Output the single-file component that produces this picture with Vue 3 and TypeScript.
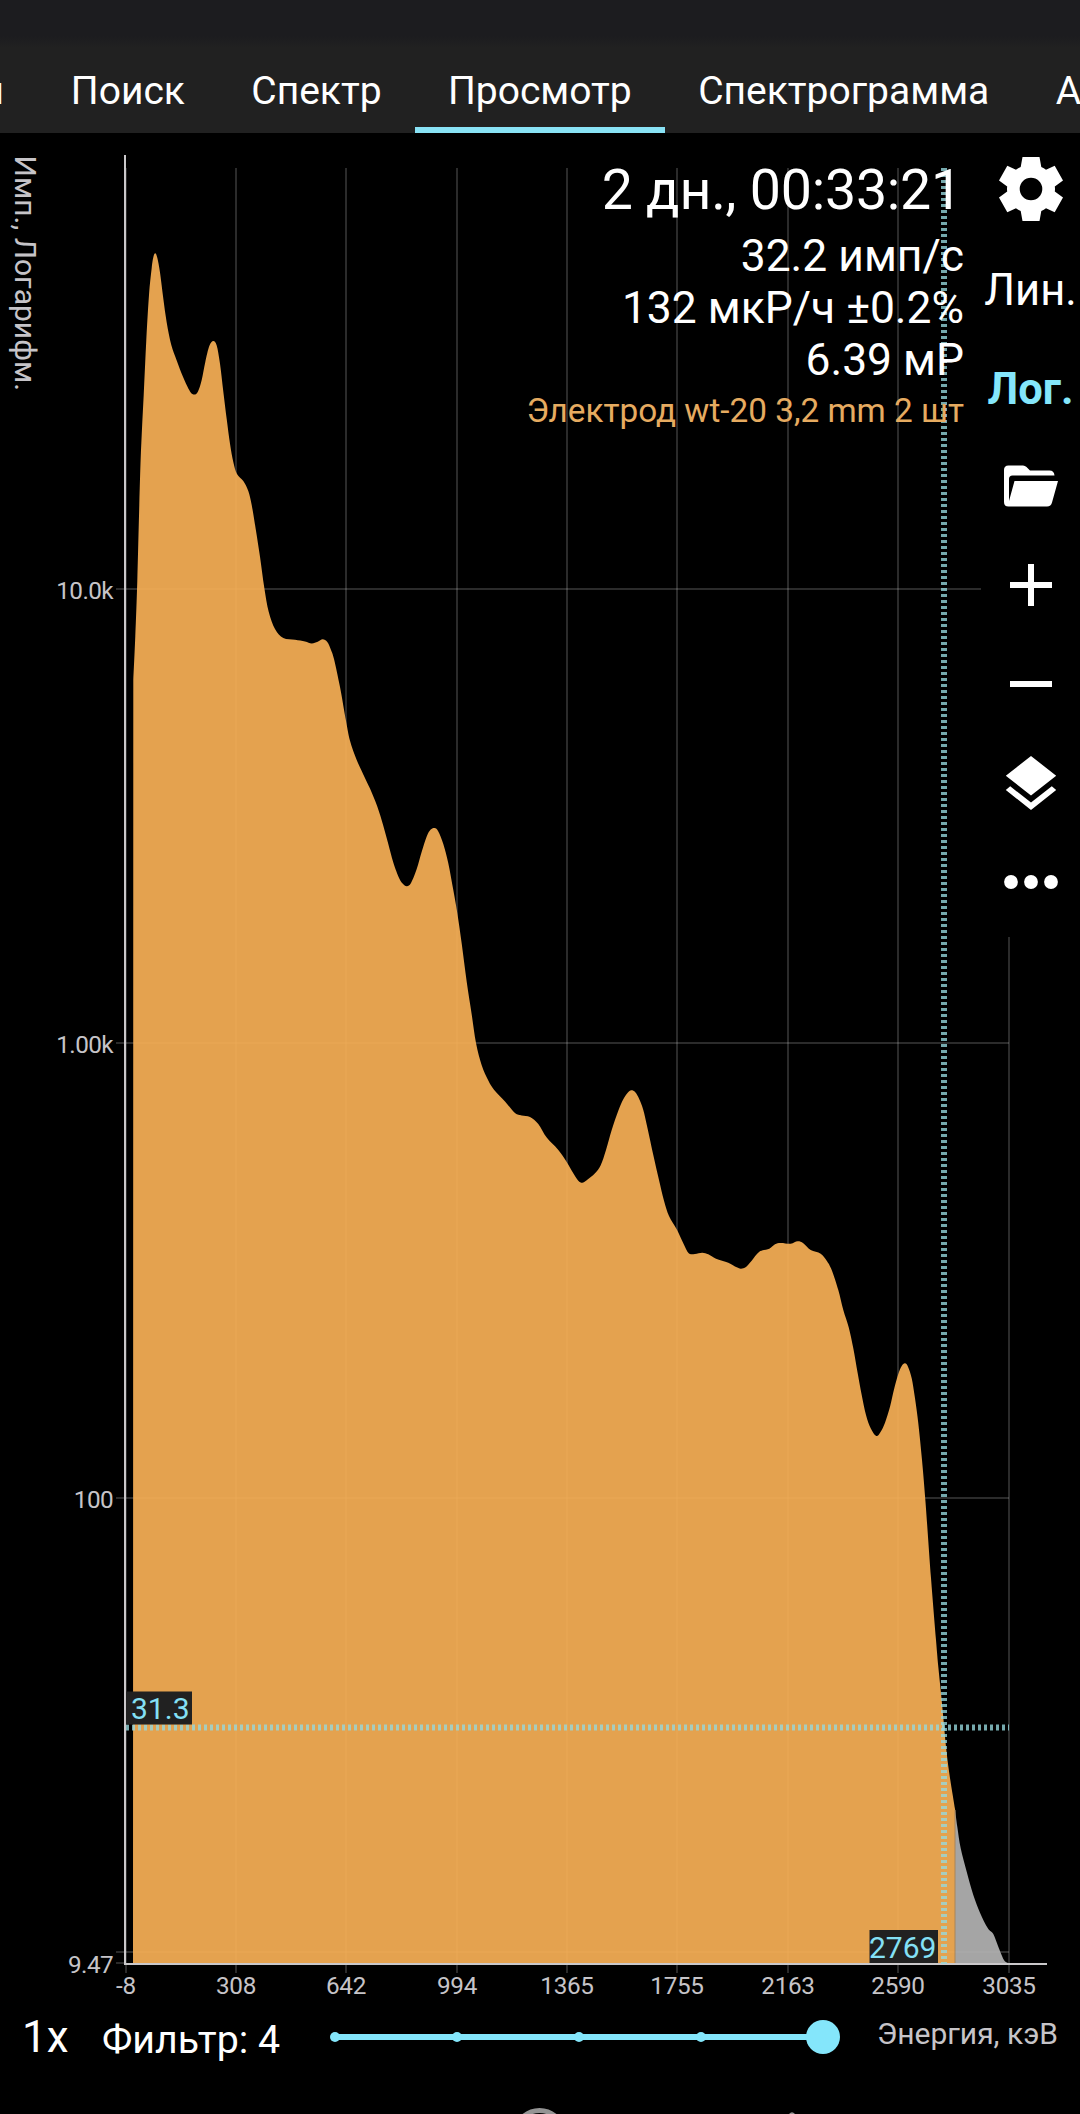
<script setup lang="ts">
type Point = [number, number]

const tabs = [
  { label: 'ы', active: false },
  { label: 'Поиск', active: false },
  { label: 'Спектр', active: false },
  { label: 'Просмотр', active: true },
  { label: 'Спектрограмма', active: false },
  { label: 'А', active: false },
]

const xTicks = [
  { x: 126, label: '-8' },
  { x: 236, label: '308' },
  { x: 346, label: '642' },
  { x: 457, label: '994' },
  { x: 567, label: '1365' },
  { x: 677, label: '1755' },
  { x: 788, label: '2163' },
  { x: 898, label: '2590' },
  { x: 1009, label: '3035' },
]

const yTicks = [
  { y: 589, label: '10.0k' },
  { y: 1043, label: '1.00k' },
  { y: 1498, label: '100' },
  { y: 1963, label: '9.47' },
]

const splitX = 955
const baseY = 1963

// Smoothed spectrum envelope in chart coordinates
const main: Point[] = [
  [133.3, 680], [135.3, 636], [137.3, 581], [139.3, 505], [141, 450], [143.7, 395], [146.3, 340], [149, 295],
  [151.7, 268], [153.5, 256.5], [155.3, 253.3], [157.3, 257.8], [160, 272.6], [163.3, 298.4], [166.7, 322.5],
  [171.3, 345], [176.7, 360.4], [183.3, 377.6], [190, 391.4], [194.3, 394.5], [198, 391.4], [201.7, 380],
  [205.3, 362], [209.3, 346], [213.3, 341], [216.7, 345.6], [220, 363.8], [223.3, 391.4], [226.7, 419],
  [230, 443.7], [233.3, 462], [237, 474], [243.3, 481], [248.3, 491], [251.7, 505], [255.7, 529], [260, 556.7],
  [264.3, 587.7], [268.7, 611.8], [275, 629], [283.3, 638], [295, 639.7], [305, 641.4], [311.7, 643.4],
  [317.7, 641.7], [322.7, 639.3], [327.3, 642], [331, 650], [334, 659], [340, 687], [346, 720.8], [350, 740.7],
  [356.7, 759.9], [363.3, 774.4], [370, 788.6], [377.3, 806.6], [383.3, 825.7], [388.3, 844], [393.3, 862.4],
  [399.3, 878.5], [403.3, 884.2], [407, 886.2], [411, 883], [416.7, 869], [421.7, 851.7], [426.7, 836.4],
  [430.7, 829.5], [434.7, 828], [438.3, 831.4], [443.3, 844], [448.3, 863.2], [453.3, 890], [457.3, 913],
  [461.7, 943.6], [466.7, 981.8], [471.7, 1014.4], [476, 1043], [481.7, 1065.3], [488.3, 1080.6], [494, 1089.8],
  [505, 1101.6], [515, 1113], [521.7, 1115.4], [530, 1117], [538.3, 1124], [546.7, 1137.6], [558.3, 1150],
  [566.7, 1162], [573.3, 1173.3], [578.3, 1180.7], [582.3, 1182.7], [586.7, 1180.3], [595, 1173.3],
  [600.7, 1165.3], [606, 1150], [611.7, 1130], [618.3, 1110.7], [623.3, 1099.3], [627.7, 1092.7], [631.3, 1090.3],
  [635.3, 1092.3], [639.3, 1099.3], [643.3, 1110], [647.3, 1127.3], [653.3, 1155], [659, 1180], [664, 1200.7],
  [669, 1216], [676.7, 1229.3], [683.3, 1243.3], [688.7, 1253.3], [695, 1254], [702.3, 1252.7], [708.3, 1254.3],
  [716, 1258.7], [728.3, 1262.7], [736.7, 1267.3], [741, 1268.7], [746, 1267], [751.7, 1260.7], [759.3, 1251.7],
  [769.3, 1248.7], [775, 1244.3], [780.7, 1243], [790.7, 1243.7], [797.7, 1241.3], [803.3, 1243.3],
  [810.7, 1250], [820.7, 1253.7], [826.7, 1260.7], [831.7, 1270], [838.3, 1290], [843.3, 1310], [848.7, 1327.3],
  [853.3, 1348.3], [857.7, 1373.3], [861.7, 1395], [866, 1415], [870.7, 1428.3], [876.3, 1436], [880.7, 1431.7],
  [885, 1422.7], [890, 1406.7], [894.3, 1388.3], [898.3, 1374], [901.7, 1366], [905, 1363.3], [908, 1366.7],
  [911.7, 1378.3], [915, 1398.3], [918.3, 1423.3], [922, 1460], [925.5, 1502], [931, 1578], [936, 1640],
  [938.3, 1666.7], [941, 1693.3], [943.7, 1721.7], [946, 1746.7], [949.3, 1773.3], [955, 1809],
]

const tail: Point[] = [
  [955, 1809], [957.3, 1826.7], [960.7, 1848.3], [966.7, 1871.7], [973.3, 1895], [980, 1912.7], [987.7, 1928],
  [993.3, 1934], [998.3, 1946.7], [1004, 1960], [1008, 1963],
]

function smooth(points: Point[]): string {
  let d = ''
  for (let i = 0; i < points.length - 1; i++) {
    const p0 = points[Math.max(i - 1, 0)]
    const p1 = points[i]
    const p2 = points[i + 1]
    const p3 = points[Math.min(i + 2, points.length - 1)]
    const c1 = [p1[0] + (p2[0] - p0[0]) / 6, p1[1] + (p2[1] - p0[1]) / 6]
    const c2 = [p2[0] - (p3[0] - p1[0]) / 6, p2[1] - (p3[1] - p1[1]) / 6]
    d += `C${c1.map((n) => n.toFixed(2))} ${c2.map((n) => n.toFixed(2))} ${p2}`
  }
  return d
}

const mainPath = `M133 ${baseY}L${main[0]}${smooth(main)}L${splitX} ${baseY}Z`
const tailPath = `M${splitX} ${baseY}L${tail[0]}${smooth(tail)}L1009 ${baseY}Z`

const filterSteps = [0, 1, 2, 3, 4]
</script>

<template>
  <div class="screen">
    <div class="status-bar"></div>
    <nav class="tabs">
      <div v-for="tab in tabs" :key="tab.label" class="tab" :class="{ active: tab.active }">{{ tab.label }}</div>
    </nav>

    <main class="chart">
      <svg class="plot" width="1080" height="1867" viewBox="0 133 1080 1867">
        <g class="grid">
          <line v-for="t in xTicks" :key="t.x" :x1="t.x" :x2="t.x" y1="168" y2="1973" />
          <line v-for="y in [589, 1043, 1498, 1952]" :key="y" x1="116" x2="1009" :y1="y" :y2="y" />
          <line x1="116" x2="126" y1="1963" y2="1963" />
        </g>
        <path :d="mainPath" class="area" />
        <path :d="tailPath" class="area-rest" />
        <line :x1="splitX" :x2="splitX" y1="1810" :y2="baseY" class="split" />
        <line x1="125" x2="125" y1="155" y2="1965" class="axis" />
        <line x1="124" x2="1047" y1="1964" y2="1964" class="axis" />
        <line x1="944" x2="944" y1="168" y2="1964" class="cursor" />
        <line x1="126" x2="1009" y1="1727.5" y2="1727.5" class="cursor" />

        <rect x="126" y="1691.5" width="66" height="33" class="badge" />
        <text x="131" y="1719" class="badge-text">31.3</text>
        <rect x="869.5" y="1930" width="68.5" height="33" class="badge" />
        <text x="869" y="1958" class="badge-text">2769</text>

        <text v-for="t in yTicks" :key="t.y" x="113" :y="t.y === 1963 ? 1973 : t.y + 9.5" class="tick end">{{ t.label }}</text>
        <text v-for="t in xTicks" :key="t.label" :x="t.x" y="1994" class="tick mid">{{ t.label }}</text>
        <text transform="translate(14.5 155.5) rotate(90)" class="axis-title">Имп., Логарифм.</text>
      </svg>

      <section class="stats">
        <div class="time">2 дн., 00:33:21</div>
        <div class="stat">32.2 имп/с</div>
        <div class="stat">132 мкР/ч ±0.2%</div>
        <div class="stat">6.39 мР</div>
        <div class="sample">Электрод wt-20 3,2 mm 2 шт</div>
      </section>

      <aside class="tools">
        <div class="tool">
          <svg width="66" height="66" viewBox="-33 -33 66 66">
            <path
              fill="#fff"
              fill-rule="evenodd"
              d="M-8.5-32H8.5L10.3-22Q13-21 15-19.2L23.7-23.2L32-8.5L23.8-2.5Q24.2 0 23.8 2.5L32 8.5L23.7 23.2L15 19.2Q13 21 10.3 22L8.5 32H-8.5L-10.3 22Q-13 21-15 19.2L-23.7 23.2L-32 8.5L-23.8 2.5Q-24.2 0-23.8-2.5L-32-8.5L-23.7-23.2L-15-19.2Q-13-21-10.3-22ZM0-11.3A11.3 11.3 0 1 0 0 11.3A11.3 11.3 0 1 0 0-11.3Z"
            />
          </svg>
        </div>
        <div class="tool label">Лин.</div>
        <div class="tool label selected">Лог.</div>
        <div class="tool">
          <svg width="56" height="42" viewBox="0 0 56 42">
            <path fill="#fff" d="M1 37V5Q1 .5 5.500.5H20Q22 .5 23.500 2L27 5.500H46.500Q51 5.500 51.500 10.500H9.500Q6 10.500 6 14V36L11.500 16H55L49 37.500Q48 41.500 44 41.500H5.500Q1 41.500 1 37Z" />
          </svg>
        </div>
        <div class="tool">
          <svg width="44" height="44" viewBox="0 0 44 44"><path d="M1 22H43M22 1V43" stroke="#fff" stroke-width="6" /></svg>
        </div>
        <div class="tool">
          <svg width="44" height="44" viewBox="0 0 44 44"><path d="M1 22H43" stroke="#fff" stroke-width="6" /></svg>
        </div>
        <div class="tool">
          <svg width="52" height="54" viewBox="0 0 52 54">
            <path fill="#fff" d="M26 0L51.200 19.700L26 39.500L.8 19.700ZM5.200 30.300L26 46.500L46.800 30.300L51.200 34L26 54L.8 34Z" />
          </svg>
        </div>
        <div class="tool">
          <svg width="54" height="16" viewBox="0 0 54 16" fill="#fff">
            <circle cx="7" cy="8" r="6.900" /><circle cx="27" cy="8" r="6.900" /><circle cx="47" cy="8" r="6.900" />
          </svg>
        </div>
      </aside>
    </main>

    <footer class="controls">
      <span class="zoom">1x</span>
      <span class="filter">Фильтр: 4</span>
      <div class="slider">
        <i v-for="s in filterSteps" :key="s" class="stop" :class="{ thumb: s === 4 }"></i>
      </div>
      <span class="unit">Энергия, кэВ</span>
    </footer>

    <div class="system-nav">
      <svg width="1080" height="10" viewBox="0 2104 1080 10">
        <circle cx="539.500" cy="2135" r="24.500" fill="none" stroke="#949494" stroke-width="5" />
        <path d="M789 2114Q792 2110.500 795 2114Z" fill="#949494" />
      </svg>
    </div>
  </div>
</template>

<style>
body {
  margin: 0;
  background: #000;
}
</style>

<style scoped>
.screen {
  width: 1080px;
  height: 2114px;
  overflow: hidden;
  display: flex;
  flex-direction: column;
  background: #000;
  color: #fff;
  font-family: Roboto, 'Noto Sans', sans-serif;
}
.status-bar {
  height: 48px;
  flex: none;
  background: linear-gradient(#1c1c1f 75%, #212121);
}
.tabs {
  height: 85px;
  flex: none;
  display: flex;
  justify-content: flex-start;
  overflow: hidden;
  margin-left: -59px;
  background: #212121;
}
.tab {
  flex: none;
  box-sizing: border-box;
  height: 85px;
  padding: 0 33.2px;
  border-bottom: 6px solid transparent;
  line-height: 86px;
  font-size: 39px;
  white-space: nowrap;
}
.tab.active {
  border-bottom-color: #89e2f5;
}
.chart {
  position: relative;
  height: 1867px;
  flex: none;
}
.plot {
  display: block;
}
.grid line {
  stroke: #fff;
  stroke-opacity: 0.17;
  stroke-width: 2;
}
.area {
  fill: #f5ae55;
  fill-opacity: 0.93;
}
.area-rest {
  fill: #b2b2b2;
  fill-opacity: 0.93;
}
.split {
  stroke: #a9855a;
  stroke-width: 1;
}
.axis {
  stroke: #cac8ca;
  stroke-width: 2;
}
.cursor {
  stroke: #96d9de;
  stroke-opacity: 0.78;
  stroke-width: 6;
  stroke-dasharray: 3 3;
}
.badge {
  fill: #212121;
}
.badge-text {
  fill: #84e0f5;
  font-size: 30px;
}
.tick {
  fill: #c6c4c8;
  font-size: 24.3px;
  letter-spacing: -0.3px;
}
.end {
  text-anchor: end;
  letter-spacing: -0.6px;
}
.mid {
  text-anchor: middle;
}
.axis-title {
  fill: #c6c4c8;
  font-size: 30px;
}
.stats {
  position: absolute;
  top: 23px;
  right: 116px;
  text-align: right;
  white-space: nowrap;
}
.time {
  font-size: 55.5px;
  letter-spacing: -0.23px;
  line-height: 70px;
  margin: 0 2px 4px 0;
}
.stat {
  font-size: 44.4px;
  line-height: 52px;
}
.sample {
  font-size: 33.3px;
  line-height: 50px;
  color: #e6ab60;
}
.tools {
  position: absolute;
  top: 0;
  right: 0;
  width: 99px;
  height: 804px;
  box-sizing: border-box;
  padding-top: 6px;
  background: #000;
  display: flex;
  flex-direction: column;
}
.tool {
  height: 99px;
  flex: none;
  display: flex;
  align-items: center;
  justify-content: center;
}
.tool svg {
  display: block;
}
.label {
  box-sizing: border-box;
  padding-top: 5px;
  font-size: 43.5px;
}
.selected {
  color: #84e6fb;
  font-weight: 700;
}
.controls {
  height: 74px;
  flex: none;
  display: flex;
  align-items: center;
  box-sizing: border-box;
  padding: 0 22px 0 22px;
  white-space: nowrap;
}
.zoom {
  width: 80px;
  font-size: 44px;
}
.filter {
  width: 228px;
  padding-top: 5px;
  font-size: 39.3px;
}
.slider {
  width: 498px;
  height: 6px;
  flex: none;
  display: flex;
  align-items: center;
  justify-content: space-between;
  background: linear-gradient(#84e6fb, #84e6fb) center / 488px 6px no-repeat;
}
.stop {
  flex: none;
  width: 10px;
  height: 10px;
  border-radius: 50%;
  background: #84e6fb;
}
.stop.thumb {
  width: 34px;
  height: 34px;
  margin: 0 -12px;
}
.unit {
  margin-left: auto;
  padding-bottom: 8px;
  font-size: 30px;
  color: #c6c4c8;
}
.system-nav {
  margin-top: auto;
  height: 10px;
}
.system-nav svg {
  display: block;
}
</style>
